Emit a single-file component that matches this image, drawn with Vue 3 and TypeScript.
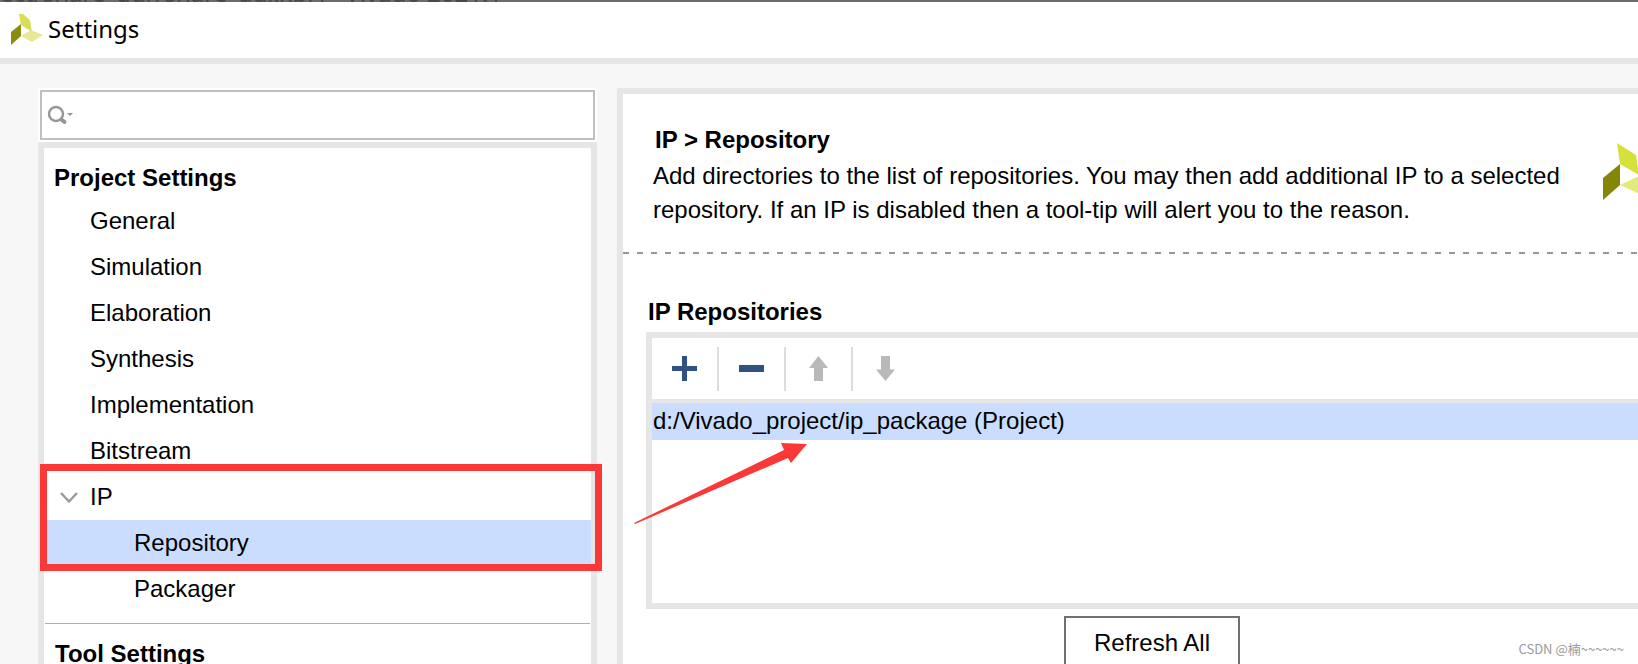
<script setup lang="ts">
import { ref } from 'vue'

const query = ref('')
const selected = ref('Repository')
const general: string[] = ['General', 'Simulation', 'Elaboration', 'Synthesis', 'Implementation', 'Bitstream']
</script>

<template>
  <div class="window">
    <div class="backdrop"><span>ect/share_qdr/share_qdr.xpr] - Vivado 2021.1</span></div>
    <header class="titlebar">
      <svg class="app-logo" width="32" height="32" viewBox="0 0 32 32" aria-hidden="true">
        <path d="M8 1H12L19 7 21 19 10 12Z" fill="#d9de58" />
        <path d="M0 19 10 11V23L0 32Z" fill="#8a8c0c" />
        <path d="M10 23 20 17 32 22 21 29Z" fill="#e6e994" />
      </svg>
      <h1>Settings</h1>
    </header>

    <div class="body">
      <aside class="side">
        <label class="search">
          <svg width="28" height="20" viewBox="0 0 28 20" aria-hidden="true">
            <circle cx="9" cy="9" r="7" fill="none" stroke="#969696" stroke-width="2.4" />
            <path d="M15 15 17.500 17" stroke="#969696" stroke-width="4" stroke-linecap="round" />
            <path d="M20 8H26L23 11Z" fill="#969696" />
          </svg>
          <input v-model="query" type="text" aria-label="Search settings" />
        </label>

        <nav class="tree" aria-label="Settings">
          <h2>Project Settings</h2>
          <button
            v-for="item in general"
            :key="item"
            type="button"
            class="row"
            :class="{ active: selected === item }"
            @click="selected = item"
          >{{ item }}</button>
          <div class="marked">
            <button type="button" class="row parent" aria-expanded="true">
              <svg width="18" height="11" viewBox="0 0 18 11" aria-hidden="true">
                <path d="M1 1 9 9.500 17 1" fill="none" stroke="#999" stroke-width="2.4" />
              </svg>
              <span>IP</span>
            </button>
            <button
              type="button"
              class="row child"
              :class="{ active: selected === 'Repository' }"
              @click="selected = 'Repository'"
            >Repository</button>
            <div class="outline"></div>
          </div>
          <button
            type="button"
            class="row child"
            :class="{ active: selected === 'Packager' }"
            @click="selected = 'Packager'"
          >Packager</button>
          <hr />
          <h2 class="tool">Tool Settings</h2>
        </nav>
      </aside>

      <main class="panel">
        <section class="intro">
          <div class="intro-text">
            <h2>IP &gt; Repository</h2>
            <p>Add directories to the list of repositories. You may then add additional IP to a selected repository. If an IP is disabled then a tool-tip will alert you to the reason.</p>
          </div>
          <svg class="logo" width="60" height="60" viewBox="0 0 60 60" aria-hidden="true">
            <path d="M14 0 33 12 36 32 17 21Z" fill="#d5e03a" />
            <path d="M0 35 17 21V42L0 57Z" fill="#858508" />
            <path d="M17 42 36 33 56 42 39 52Z" fill="#e3ea7c" />
          </svg>
        </section>
        <div class="dashes"></div>

        <section class="repos">
          <h3>IP Repositories</h3>
          <div class="list-box">
            <div class="toolbar">
              <button type="button" aria-label="Add repository">
                <svg width="25" height="25" viewBox="0 0 25 25"><path d="M10 0H15V10H25V15H15V25H10V15H0V10H10Z" fill="#315084" /></svg>
              </button>
              <button type="button" aria-label="Remove repository">
                <svg width="25" height="25" viewBox="0 0 25 25"><path d="M0 9H25V16H0Z" fill="#315084" /></svg>
              </button>
              <button type="button" aria-label="Move up" disabled>
                <svg width="19" height="25" viewBox="0 0 19 25"><path d="M9.500 0 19 12H14V25H5V12H0Z" fill="#b9b9b9" /></svg>
              </button>
              <button type="button" aria-label="Move down" disabled>
                <svg width="19" height="25" viewBox="0 0 19 25"><path d="M9.500 25 0 13.500H5V0H14V13.500H19Z" fill="#b9b9b9" /></svg>
              </button>
            </div>
            <ul class="list">
              <li>d:/Vivado_project/ip_package (Project)</li>
            </ul>
            <svg class="arrow" width="174" height="82" viewBox="0 0 174 82" aria-hidden="true">
              <path d="M0 80 150 7 147 0 173 1 157 20 154 15 1 81Z" fill="#fb3838" />
            </svg>
          </div>
          <button type="button" class="refresh">Refresh All</button>
        </section>
      </main>
    </div>
    <div class="credit">CSDN @楠~~~~~~</div>
  </div>
</template>

<style>
body {
  margin: 0;
}
</style>

<style scoped>
.window {
  position: relative;
  display: flex;
  flex-direction: column;
  height: 100vh;
  overflow: hidden;
  background: #f7f7f7;
  color: #000;
  font-family: "Liberation Sans", Arial, sans-serif;
  font-size: 24px;
  line-height: 34px;
}
h1, h2, h3, p, ul {
  margin: 0;
  padding: 0;
}
button {
  box-sizing: border-box;
  padding: 0;
  border: 0;
  background: none;
  color: inherit;
  font: inherit;
}
svg {
  display: block;
  flex: none;
}
.backdrop {
  display: flex;
  align-items: flex-end;
  flex: none;
  height: 2px;
  overflow: hidden;
  background: #6c6c6c;
  color: #484848;
  font-family: "Noto Sans", sans-serif;
  line-height: 18px;
  white-space: nowrap;
}
.titlebar {
  display: flex;
  align-items: center;
  flex: none;
  gap: 5px;
  height: 54px;
  padding: 0 0 2px 11px;
  border-bottom: 6px solid #e6e6e6;
  background: #fff;
}
h1 {
  font-family: "Noto Sans", sans-serif;
  font-size: 24px;
  font-weight: 400;
}
h2, h3 {
  font-size: 24px;
  font-weight: 700;
}
.body {
  display: flex;
  flex: 1;
  gap: 20px;
  min-height: 0;
  padding: 24px 0 0 38px;
}
.side {
  display: flex;
  flex-direction: column;
  flex: 0 0 559px;
}
.search {
  display: flex;
  align-items: center;
  flex: none;
  box-sizing: border-box;
  height: 50px;
  margin: 2px;
  padding-left: 5px;
  border: 2px solid #bfbfbf;
  background: #fff;
  outline: 2px solid #fff;
}
.search input {
  flex: 1;
  min-width: 0;
  border: 0;
  outline: 0;
  background: none;
  font: inherit;
}
.tree {
  flex: 1;
  border: 6px solid #e6e6e6;
  border-bottom: 0;
  background: #fff;
}
.tree h2 {
  padding: 13px 10px 3px;
}
.tree h2.tool {
  padding: 13px 11px 3px;
}
.row {
  display: flex;
  align-items: center;
  width: 100%;
  height: 46px;
  padding-left: 46px;
  text-align: left;
}
.row.parent {
  gap: 12px;
  padding-left: 16px;
}
.row.child {
  padding-left: 90px;
}
.row.active {
  background: #cbddff;
}
.marked {
  position: relative;
}
.outline {
  position: absolute;
  inset: -10px -11px -5px -4px;
  border: 7px solid #fb3838;
  pointer-events: none;
}
hr {
  height: 1px;
  margin: 11px 1px 0;
  border: 0;
  background: #b0b0b0;
}
.panel {
  flex: 1;
  min-width: 0;
  margin-right: -49px;
  border: 6px solid #e6e6e6;
  border-bottom: 0;
  background: #fff;
}
.intro {
  display: flex;
  justify-content: space-between;
  padding: 29px 18px 25px 30px;
}
.intro-text h2 {
  padding: 0 0 2px 2px;
}
.intro-text {
  flex: 1;
  padding-right: 32px;
}
.logo {
  margin-top: 20px;
}
.dashes {
  height: 2px;
  background: repeating-linear-gradient(90deg, #979797 0 6px, transparent 6px 14px);
}
.repos {
  display: flex;
  flex-direction: column;
  padding: 41px 23px 0;
}
.repos h3 {
  padding: 0 0 3px 2px;
}
.list-box {
  position: relative;
  border: 6px solid #e6e6e6;
}
.toolbar {
  display: flex;
  align-items: center;
  height: 61px;
  border-bottom: 4px solid #e6e6e6;
}
.toolbar button {
  display: flex;
  align-items: center;
  justify-content: center;
  width: 65px;
  height: 44px;
}
.toolbar button + button {
  width: 67px;
  border-left: 2px solid #dcdcdc;
}
.list {
  height: 200px;
  list-style: none;
}
.list li {
  padding: 1px 1px 2px;
  background: #cbddff;
}
.arrow {
  position: absolute;
  top: 105px;
  left: -18px;
}
.refresh {
  align-self: center;
  width: 176px;
  height: 54px;
  margin-top: 7px;
  border: 2px solid #707070;
}
.credit {
  position: absolute;
  right: 14px;
  bottom: 5px;
  color: #999;
  font-family: "Noto Sans CJK SC", sans-serif;
  font-size: 13px;
  line-height: 20px;
}
</style>
